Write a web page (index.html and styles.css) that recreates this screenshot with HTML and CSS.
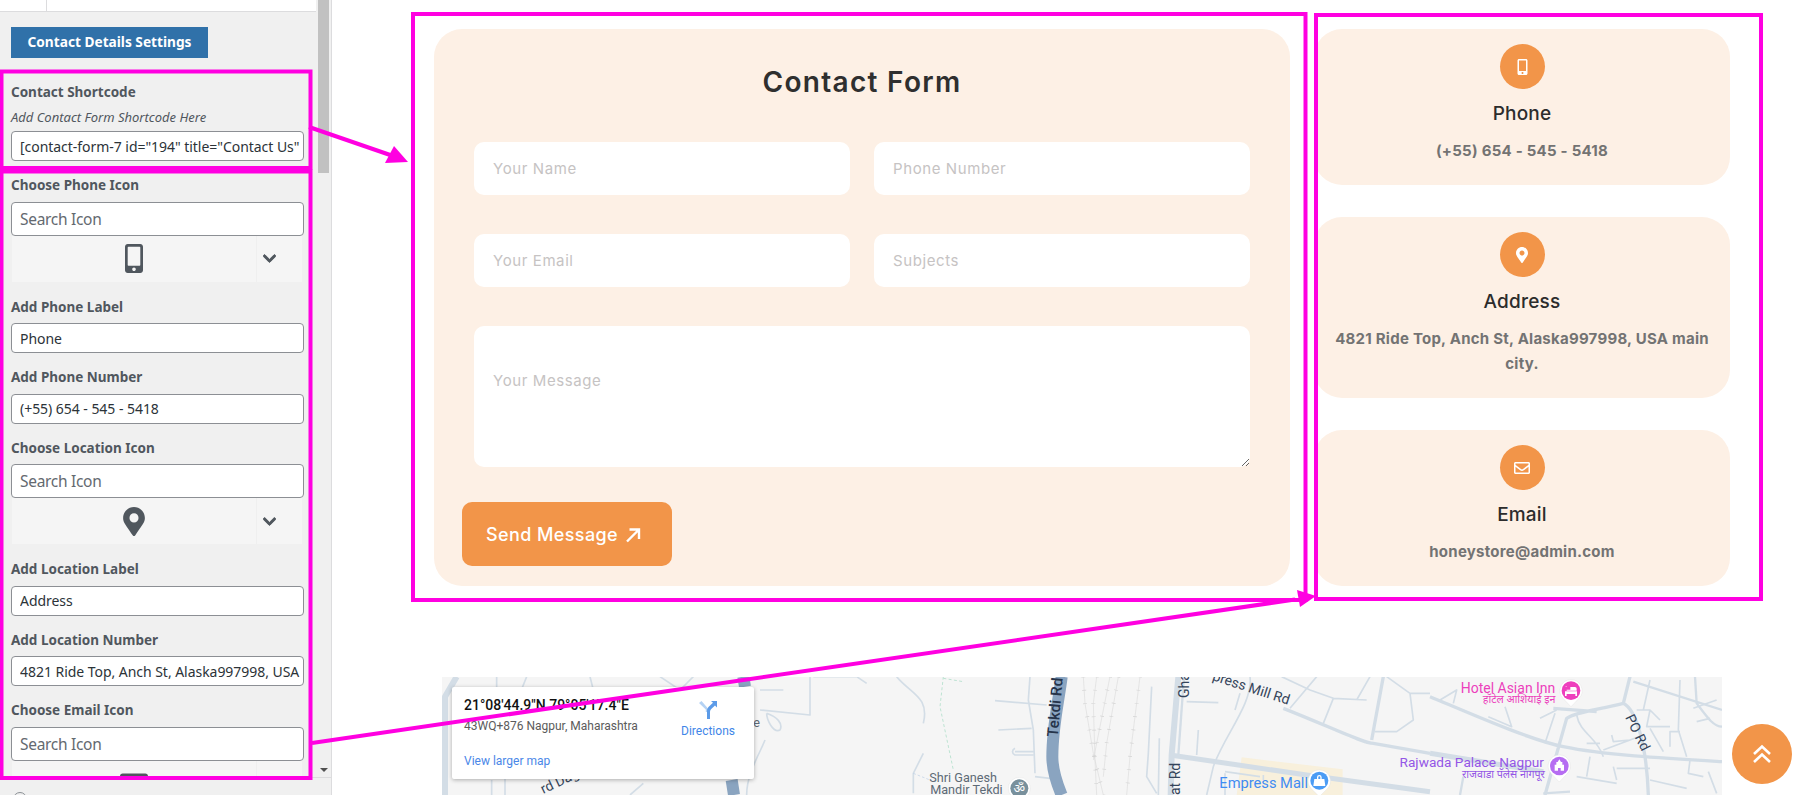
FILE: index.html
```html
<!DOCTYPE html>
<html lang="en">
<head>
<meta charset="utf-8">
<title>Contact Details Settings</title>
<link rel="stylesheet" href="styles.css">
</head>
<body>
<svg class="defs" aria-hidden="true">
  <symbol id="i-mobile" viewBox="0 0 320 512"><path d="M272 0H48C21.5 0 0 21.5 0 48v416c0 26.5 21.5 48 48 48h224c26.5 0 48-21.5 48-48V48c0-26.5-21.5-48-48-48zM160 480c-17.7 0-32-14.3-32-32s14.3-32 32-32 32 14.3 32 32-14.3 32-32 32zm112-108c0 6.6-5.4 12-12 12H60c-6.6 0-12-5.4-12-12V60c0-6.6 5.4-12 12-12h200c6.6 0 12 5.4 12 12v312z"/></symbol>
  <symbol id="i-pin" viewBox="0 0 384 512"><path d="M172.268 501.67C26.97 291.031 0 261.28 0 192 0 85.961 85.961 0 192 0s192 85.961 192 192c0 69.28-26.97 99.031-172.268 309.67-9.535 13.774-29.93 13.773-39.464 0zM192 272c44.183 0 80-35.817 80-80s-35.817-80-80-80-80 35.817-80 80 35.817 80 80 80z"/></symbol>
  <symbol id="i-chev" viewBox="0 0 448 512"><path d="M207.029 381.476L12.686 187.132c-9.373-9.373-9.373-24.569 0-33.941l22.667-22.667c9.357-9.357 24.522-9.375 33.901-.04L224 284.505l154.745-154.021c9.379-9.335 24.544-9.317 33.901.04l22.667 22.667c9.373 9.373 9.373 24.569 0 33.941L240.971 381.476c-9.373 9.372-24.569 9.372-33.942 0z"/></symbol>
  <symbol id="i-mail" viewBox="0 0 512 512"><path d="M464 64H48C21.49 64 0 85.49 0 112v288c0 26.51 21.49 48 48 48h416c26.51 0 48-21.49 48-48V112c0-26.51-21.49-48-48-48zm0 48v40.805c-22.422 18.259-58.168 46.651-134.587 106.49-16.841 13.247-50.201 45.072-73.413 44.701-23.208.375-56.579-31.459-73.413-44.701C106.18 199.465 70.425 171.067 48 152.805V112h416zM48 400V214.398c22.914 18.251 55.409 43.862 104.938 82.646 21.857 17.205 60.134 55.186 103.062 54.955 42.717.231 80.509-37.199 103.053-54.947 49.528-38.783 82.032-64.401 104.947-82.653V400H48z"/></symbol>
  <symbol id="i-mail-solid" viewBox="0 0 512 512"><path d="M502.3 190.8c3.9-3.1 9.7-.2 9.7 4.7V400c0 26.5-21.5 48-48 48H48c-26.5 0-48-21.5-48-48V195.6c0-5 5.7-7.8 9.7-4.7 22.4 17.4 52.1 39.5 154.1 113.6 21.1 15.4 56.7 47.8 92.2 47.6 35.7.3 72-32.8 92.3-47.6 102-74.1 131.6-96.3 154-113.7zM256 320c23.2.4 56.6-29.2 73.4-41.4 132.7-96.3 142.8-104.7 173.4-128.7 5.8-4.5 9.2-11.5 9.2-18.9v-19c0-26.5-21.5-48-48-48H48C21.5 64 0 85.5 0 112v19c0 7.4 3.4 14.3 9.2 18.9 30.6 23.9 40.7 32.4 173.4 128.7 16.8 12.2 50.2 41.8 73.4 41.4z"/></symbol>
</svg>

<aside class="sidebar">
  <div class="pane">
    <div class="panel">
      <div class="tabs"><span class="tab"></span></div>
      <div class="panel-body">
        <button class="settings-btn" type="button">Contact Details Settings</button>
        <div class="field field-first">
          <div class="label">Contact Shortcode</div>
          <div class="hint">Add Contact Form Shortcode Here</div>
          <input class="text" type="text" value='[contact-form-7 id="194" title="Contact Us"'>
        </div>
        <div class="field">
          <div class="label">Choose Phone Icon</div>
          <input class="search" type="text" placeholder="Search Icon">
          <div class="picker">
            <span class="picked"><svg class="pick-ic pick-mobile"><use href="#i-mobile"/></svg></span>
            <span class="caret"><svg class="chev"><use href="#i-chev"/></svg></span>
          </div>
        </div>
        <div class="field">
          <div class="label">Add Phone Label</div>
          <input class="text" type="text" value="Phone">
        </div>
        <div class="field">
          <div class="label">Add Phone Number</div>
          <input class="text" type="text" value="(+55) 654 - 545 - 5418">
        </div>
        <div class="field">
          <div class="label">Choose Location Icon</div>
          <input class="search" type="text" placeholder="Search Icon">
          <div class="picker">
            <span class="picked"><svg class="pick-ic pick-pin"><use href="#i-pin"/></svg></span>
            <span class="caret"><svg class="chev"><use href="#i-chev"/></svg></span>
          </div>
        </div>
        <div class="field">
          <div class="label">Add Location Label</div>
          <input class="text" type="text" value="Address">
        </div>
        <div class="field">
          <div class="label">Add Location Number</div>
          <input class="text" type="text" value="4821 Ride Top, Anch St, Alaska997998, USA main city.">
        </div>
        <div class="field">
          <div class="label">Choose Email Icon</div>
          <input class="search" type="text" placeholder="Search Icon">
          <div class="picker">
            <span class="picked"><svg class="pick-ic pick-mail"><use href="#i-mail-solid"/></svg></span>
            <span class="caret"><svg class="chev"><use href="#i-chev"/></svg></span>
          </div>
        </div>
      </div>
    </div>
    <div class="scrollbar"><div class="thumb"></div><span class="sb-down"></span></div>
  </div>
  <div class="side-foot"><span class="foot-dot"></span></div>
</aside>

<main class="main">
  <section class="contact">
    <form class="form-card">
      <h2 class="form-title">Contact Form</h2>
      <div class="form-grid">
        <input class="f-input" type="text" placeholder="Your Name">
        <input class="f-input" type="text" placeholder="Phone Number">
        <input class="f-input" type="text" placeholder="Your Email">
        <input class="f-input" type="text" placeholder="Subjects">
        <textarea class="f-area" placeholder="Your Message"></textarea>
      </div>
      <button class="send" type="button">Send Message
        <svg class="send-ic" viewBox="0 0 16 16"><path d="M2 14.500 14 2.500M4.500 2.500H14V12"/></svg>
      </button>
    </form>
    <div class="cards">
      <div class="card">
        <span class="badge"><svg class="b-mobile"><use href="#i-mobile"/></svg></span>
        <h3 class="card-title">Phone</h3>
        <p class="card-text">(+55) 654 - 545 - 5418</p>
      </div>
      <div class="card">
        <span class="badge"><svg class="b-pin"><use href="#i-pin"/></svg></span>
        <h3 class="card-title">Address</h3>
        <p class="card-text">4821 Ride Top, Anch St, Alaska997998, USA main city.</p>
      </div>
      <div class="card">
        <span class="badge"><svg class="b-mail"><use href="#i-mail"/></svg></span>
        <h3 class="card-title">Email</h3>
        <p class="card-text">honeystore@admin.com</p>
      </div>
    </div>
  </section>

  <div class="map">
    <svg class="map-svg" viewBox="0 0 1280 118">
      <!-- west part -->
      <g transform="translate(-12 -17) scale(.33333)">
        <path class="r r7" d="M80 50 45 110V405"/>
        <path class="r r2" d="M200 50V90M290 50 270 100M480 50 490 90M690 50 750 90 790 50M185 360V405M225 350V405M640 370 600 405"/>
        <path class="hw" d="M905 360 912 405"/>
        <path class="hw" d="M940 50 945 80"/>
        <path class="r r2" d="M990 90H1060M1140 50V165L990 150M1010 160C1040 170 1060 190 1050 210 1030 220 1010 180 1010 160M1005 240C990 280 950 340 950 405M1150 50H1280L1310 70M1400 50C1440 100 1500 110 1480 190M1450 400V340L1480 280"/>
        <path class="dash" d="M1450 340 1500 360"/>
        <text class="lb" transform="translate(340 402) rotate(-25)">rd Daga</text>
        <text class="lb-g" x="970" y="200">e</text>
      </g>
      <!-- centre part -->
      <g transform="translate(488 -17) scale(.33333)">
        <path class="dash-g" d="M40 50 30 140 70 330M40 55 100 65"/>
        <path class="mall" d="M935 292 1238 328V405H920Z"/>
        <path class="r r2" d="M300 50 295 120 310 210 315 340M195 122 350 135M205 210 305 205M255 275H310M255 265C245 270 245 280 255 285H310M315 350 360 355"/>
        <path class="hw" d="M395 50C385 130 367 200 367 290 367 340 385 380 395 405"/>
        <path class="rail" d="M460 50 465 130 490 280 520 405M500 50 490 130 495 300 500 405M540 50 510 200 490 300M565 50 530 250 520 350M630 50 600 290 590 405"/>
        <path class="ties" d="M460 50 465 130 490 280 520 405M500 50 490 130 495 300 500 405M540 50 510 200 490 300M565 50 530 250 520 350M630 50 600 290 590 405"/>
        <path class="r r2" d="M665 80 655 280 650 350 680 400M688 235 685 405M770 125 865 128M805 210 800 285M960 50C970 130 880 230 850 320L830 405M930 100 915 150M1055 50 1140 90 1210 115 1180 190M1210 115 1310 120M1160 50 1080 145M1320 50 1280 120M1370 50 1440 100H1500M1440 100 1450 180 1400 215H1335M885 340V405M885 335 990 350M1000 345V360"/>
        <path class="r r7" d="M745 50 725 285 722 405"/>
        <path class="r r3" d="M762 50 745 285"/>
        <path class="r r6" d="M720 285 1130 345 1500 395"/>
        <path class="r r4" d="M1060 145C1200 200 1300 250 1330 250L1500 280M1360 50 1325 240"/>
        <text class="lb-b" transform="translate(383 232) rotate(-85)">Tekdi Rd</text>
        <text class="lb" transform="translate(777 114) rotate(-90)">Gha</text>
        <text class="lb" transform="translate(750 405) rotate(-90)">at Rd</text>
        <text class="lb" transform="translate(845 60) rotate(18)">press Mill Rd</text>
        <text class="lb-g" x="-2" y="365">Shri Ganesh</text>
        <text class="lb-g" x="218" y="402" text-anchor="end">Mandir Tekdi</text>
        <circle class="pin-ring" cx="268" cy="385" r="33"/>
        <circle class="pin-grey" cx="268" cy="385" r="27"/>
        <text class="lb-om" x="268" y="400" text-anchor="middle">ॐ</text>
        <text class="lb-blue" x="868" y="384">Empress Mall</text>
        <path class="pin-ring" d="M1168 330a33 33 0 0 1 24 56l-24 24-24-24a33 33 0 0 1 24-56Z"/>
        <circle class="pin-blue" cx="1168" cy="362" r="27"/>
        <path class="bag" d="M1153 357H1183L1186 378H1150ZM1161 357V352A7 7 0 0 1 1175 352V357H1171V352A3 3 0 0 0 1165 352V357Z"/>
      </g>
      <!-- east part -->
      <g transform="translate(988 -17) scale(.33333)">
        <path class="r r2" d="M30 120 80 90 70 130M225 140 245 200 175 170M330 175 380 150M375 160 345 250M440 165C450 220 500 230 520 290M470 250H510M480 290 470 350M550 320 560 360M560 325H660M520 270 640 225M545 225 550 245 600 240M640 150 660 60M620 150 660 150 690 180M660 150 650 200 720 200M660 205 700 275M750 60 745 210 770 290M720 260 720 215 750 215M800 185 840 175M780 300 775 340 820 350M835 335 860 400M440 350 560 370M660 360 770 385M860 120 790 145"/>
        <path class="r r3" d="M610 65 876 150M795 50 800 130C830 170 850 200 876 200"/>
        <path class="r r4" d="M0 110C120 160 300 240 400 260 520 285 700 295 876 305M600 50 580 130C500 150 440 155 410 175L345 405M370 145 500 155M580 130C620 150 650 260 655 405"/>
        <path class="r r6" d="M0 280 340 335"/>
        <path class="r r3" d="M100 350 90 405M340 400 420 395"/>
        <text class="lb" transform="translate(585 172) rotate(64)">PO Rd</text>
        <text class="lb-pink" x="376" y="98" text-anchor="end">Hotel Asian Inn</text>
        <text class="lb-pink-s" x="376" y="130" text-anchor="end">हॉटेल आशियाई इन</text>
        <path class="pin-ring" d="M423 59a33 33 0 0 1 24 56l-24 25-24-25a33 33 0 0 1 24-56Z"/>
        <circle class="pin-pink" cx="423" cy="92" r="28"/>
        <path class="pin-w" d="M405 78h5v14h30v-6a5 5 0 0 0-5-5h-14v8h-11v-9zM405 94h36v14h-5v-6h-26v6h-5z"/>
        <text class="lb-purple" x="342" y="322" text-anchor="end">Rajwada Palace Nagpur</text>
        <text class="lb-purple-s" x="345" y="355" text-anchor="end">राजवाडा पॅलेस नागपूर</text>
        <path class="pin-ring" d="M388 285a33 33 0 0 1 24 56l-24 25-24-25a33 33 0 0 1 24-56Z"/>
        <circle class="pin-purple" cx="388" cy="318" r="28"/>
        <path class="pin-w" d="M388 298l5 8h4v8h5v18h-10v-8h-8v8h-10v-18h5v-8h4z"/>
      </g>
    </svg>
    <div class="info">
      <div class="info-main">
        <div class="info-title">21°08'44.9"N 79°05'17.4"E</div>
        <div class="info-sub">43WQ+876 Nagpur, Maharashtra</div>
        <a class="info-link">View larger map</a>
      </div>
      <div class="dir">
        <svg class="dir-ic" viewBox="0 0 20 20"><path class="dir-a" d="M1 3 3.500 1 10 8.500V12H7.800V9.500Z"/><path class="dir-b" d="M9 19V11C9 8.500 10 7.500 11.500 6L15 2.800 13 1H19V7.500L17 5.500 13.500 8.800C12.500 9.800 12 10.500 12 12V19Z"/></svg>
        <span>Directions</span>
      </div>
    </div>
  </div>
</main>

<a class="to-top"><svg viewBox="0 0 20 22"><path d="M2 11 10 3.500 18 11M2 19 10 11.500 18 19"/></svg></a>

<svg class="notes" viewBox="0 0 1820 795" aria-hidden="true">
  <g class="box">
    <rect x="1.500" y="71.500" width="309" height="96.500"/>
    <rect x="1.500" y="171.500" width="309" height="606.500"/>
    <rect x="413" y="14" width="892.500" height="586"/>
    <rect x="1316" y="15" width="445" height="584"/>
  </g>
  <path class="line" d="M309 127 396 157"/>
  <path class="head" d="M408 162 385 163 394 146Z"/>
  <path class="line" d="M312 743 1295 599.500"/>
  <path class="head" d="M1316 596 1300 607 1297 590Z"/>
</svg>
</body>
</html>
```

FILE: styles.css
```css
* { box-sizing: border-box; }
html, body { margin: 0; height: 795px; overflow: hidden; background: #fff; }
body { display: flex; font-family: "Inter", "Noto Sans", sans-serif; position: relative; }
.defs { position: absolute; width: 0; height: 0; }

/* customizer sidebar */
.sidebar { width: 332px; flex: none; height: 795px; display: flex; flex-direction: column; background: #f0f0f0; border-right: 1px solid #dcdcde; font-family: "Noto Sans", sans-serif; }
.pane { height: 778px; flex: none; display: flex; overflow: hidden; border-bottom: 1px solid #dcdcde; }
.panel { width: 318px; flex: none; overflow: hidden; }
.tabs { width: 316px; height: 12px; background: #fff; border-bottom: 1px solid #dcdcde; }
.tab { display: block; width: 47px; height: 11px; border-right: 1px solid #dcdcde; }
.panel-body { padding: 15px 12px 0 11px; width: 316px; }
.settings-btn { display: block; width: 197px; height: 31px; border: 0; background: #3071a9; color: #fff; font: 700 13.7px/29px "Noto Sans", sans-serif; padding: 0 0 2px; }
.field { margin-bottom: 15px; }
.field-first { margin-top: 25px; margin-bottom: 15px; }
.label { font-size: 13.5px; font-weight: 700; line-height: 18px; margin-bottom: 7.5px; color: #50575e; }
.field-first .label { margin-bottom: 7px; }
.hint { font-size: 13px; font-style: italic; line-height: 18px; color: #50575e; margin-bottom: 5px; }
.text, .search { display: block; width: 293px; border: 1px solid #8c8f94; border-radius: 4px; background: #fff; padding: 0 8px; color: #2c3338; font-family: "Noto Sans", sans-serif; outline: 0; }
.text { height: 30px; font-size: 14px; letter-spacing: -.04px; padding-right: 0; }
.search { height: 34px; font-size: 15.5px; letter-spacing: -.3px; }
.search::placeholder { color: #646970; opacity: 1; }
.picker { display: flex; width: 290px; height: 46px; margin: 0 0 16px 1px; background: #f5f5f5; }
.picked { flex: 1; display: flex; align-items: center; justify-content: center; }
.caret { width: 46px; display: flex; align-items: center; padding-left: 6px; border-left: 1px solid #efefef; }
.chev { width: 13px; height: 15px; fill: #50575e; stroke: #50575e; stroke-width: 30; }
.pick-ic { fill: #50575e; }
.pick-mobile { width: 18px; height: 29px; }
.pick-pin { width: 22px; height: 29px; }
.pick-mail { width: 28px; height: 28px; }
.scrollbar { width: 14px; position: relative; padding-right: 2px; }
.thumb { width: 11px; height: 173px; background: #c1c1c1; }
.sb-down { position: absolute; left: 2px; bottom: 5px; border: 4px solid transparent; border-top: 4px solid #505050; border-bottom: 0; }
.side-foot { flex: 1; padding: 14px 0 0 13px; overflow: hidden; }
.foot-dot { display: block; width: 14px; height: 14px; border: 1.5px solid #8a8f94; border-radius: 50%; }

/* main */
.main { flex: 1; min-width: 0; padding: 29px 0 0 102px; }
.contact { display: grid; grid-template-columns: 856px 416px; column-gap: 24px; }
.form-card { height: 557px; background: #fdf0e5; border-radius: 28px; padding: 33px 0 0 28px; }
.form-title { margin: 0 0 40px -28px; text-align: center; font-size: 28px; line-height: 40px; font-weight: 600; color: #2f2f2f; letter-spacing: 1.3px; }
.form-grid { display: grid; grid-template-columns: 376px 376px; column-gap: 24px; row-gap: 39px; margin-left: 12px; }
.f-input, .f-area { border: 0; border-radius: 10px; background: #fff; padding: 0 19px; font: 400 15px/22px "Inter", "Noto Sans", sans-serif; letter-spacing: .6px; color: #333; outline: 0; display: block; }
.f-input { height: 53px; width: 376px; }
.f-area { grid-column: 1 / 3; width: 776px; height: 141px; padding-top: 44px; margin: 0; }
.f-input::placeholder, .f-area::placeholder { color: #c6c3c3; opacity: 1; }
.send { display: flex; align-items: center; gap: 7px; margin-top: 35px; width: 210px; height: 64px; border: 0; border-radius: 10px; background: #f29549; color: #fff; font: 500 18px/1 "Inter", "Noto Sans", sans-serif; letter-spacing: .4px; padding: 2px 0 0 24px; }
.send-ic { width: 16px; height: 16px; fill: none; stroke: #fff; stroke-width: 2.4; }
.cards { display: flex; flex-direction: column; gap: 32px; }
.card { display: flex; flex-direction: column; align-items: center; text-align: center; background: #fdf0e5; border-radius: 28px; padding: 15px 15px 22.5px; }
.badge { width: 45px; height: 45px; border-radius: 50%; background: #f29549; display: flex; align-items: center; justify-content: center; fill: #fff; }
.b-mobile { width: 11px; height: 16px; }
.b-pin { width: 12px; height: 16px; }
.b-mail { width: 16px; height: 16px; }
.card-title { margin: 10px 0 0; font-size: 19px; font-weight: 500; line-height: 30px; color: #2c2c2c; letter-spacing: .2px; }
.card-text { margin: 8.5px 0 0; font-size: 15px; font-weight: 700; line-height: 25px; color: #737373; letter-spacing: .25px; }

/* map */
.map { position: relative; width: 1280px; height: 118px; margin: 91px 0 0 8px; background: #f5f5f5; overflow: hidden; }
.map-svg { display: block; width: 1280px; height: 118px; }
.r { fill: none; stroke: #d3dde6; stroke-linejoin: round; }
.r2 { stroke-width: 5; }
.r3 { stroke-width: 7; }
.r4 { stroke-width: 10; }
.r6 { stroke-width: 15; }
.r7 { stroke-width: 18; }
.hw { fill: none; stroke: #8aa4c0; stroke-width: 36; }
.rail { fill: none; stroke: #dcdcdc; stroke-width: 2; }
.ties { fill: none; stroke: #d4d4d4; stroke-width: 12; stroke-dasharray: 2 38; }
.dash { fill: none; stroke: #b9cde4; stroke-width: 2; stroke-dasharray: 8 6; }
.dash-g { fill: none; stroke: #bde3d2; stroke-width: 3; stroke-dasharray: 9 7; }
.mall { fill: #f8f0dc; }
.map text { font-family: "Roboto", "Noto Sans", sans-serif; }
.lb { font-size: 42px; fill: #34445a; }
.lb-b { font-size: 46px; font-weight: 500; fill: #26344a; }
.lb-g { font-size: 38px; fill: #5d6a76; }
.lb-om { font-size: 38px; fill: #fff; }
.lb-blue { font-size: 44px; fill: #3f8cf3; }
.lb-pink { font-size: 42px; fill: #ec3fbc; }
.lb-pink-s { font-size: 32px; fill: #ec3fbc; }
.lb-purple { font-size: 41px; fill: #9456e6; }
.lb-purple-s { font-size: 32px; fill: #9456e6; }
.pin-ring { fill: #fff; stroke: #dcdcdc; stroke-width: 1; }
.pin-grey { fill: #78909c; }
.pin-blue { fill: #4b9cf5; }
.pin-pink { fill: #ee3fbd; }
.pin-purple { fill: #b66df2; }
.pin-w, .bag { fill: #fff; }
.info { position: absolute; left: 10px; top: 10px; width: 302px; height: 92px; background: #fff; border-radius: 2px; box-shadow: 0 1px 4px rgba(0,0,0,.3); display: flex; font-family: "Roboto", sans-serif; }
.info-main { width: 218px; padding: 9px 0 0 12px; }
.info-title { font-size: 14px; font-weight: 500; line-height: 18px; color: #111; white-space: nowrap; }
.info-sub { font-size: 12px; line-height: 16px; margin-top: 4px; color: #5b5b5b; white-space: nowrap; }
.info-link { display: block; font-size: 12px; line-height: 16px; margin-top: 19px; color: #4a87e8; }
.dir { flex: 1; display: flex; flex-direction: column; align-items: center; padding: 13px 8px 0 0; font-size: 12px; line-height: 16px; color: #3f86e8; }
.dir-ic { width: 20px; height: 20px; margin-bottom: 3px; }
.dir-a { fill: #b4d2f4; }
.dir-b { fill: #5c9be8; }

/* floating scroll-to-top */
.to-top { position: absolute; left: 1732px; top: 724px; width: 60px; height: 60px; border-radius: 50%; background: #f29549; display: flex; align-items: center; justify-content: center; }
.to-top svg { width: 20px; height: 22px; fill: none; stroke: #fff; stroke-width: 2.6; }

/* magenta annotation layer */
.notes { position: absolute; left: 0; top: 0; width: 1820px; height: 795px; pointer-events: none; }
.box rect { fill: none; stroke: #ff00e1; stroke-width: 4; }
.line { fill: none; stroke: #ff00e1; stroke-width: 4; }
.head { fill: #ff00e1; }
```
